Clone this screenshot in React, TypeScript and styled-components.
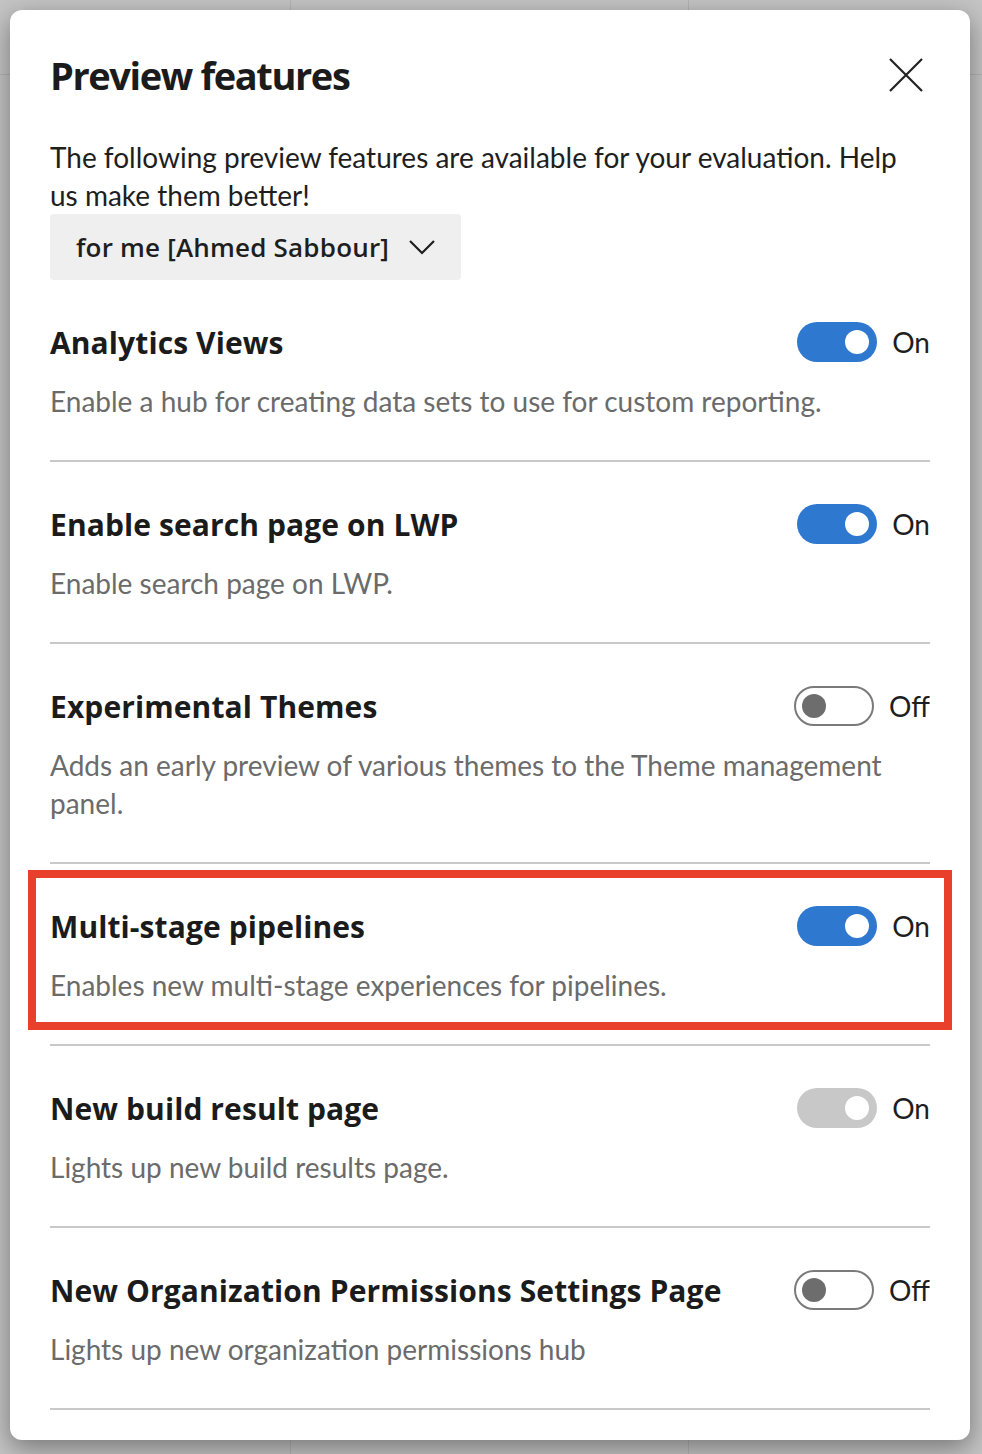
import React from 'react';
import styled, { createGlobalStyle } from 'styled-components';

const GlobalStyle = createGlobalStyle`
  html, body {
    margin: 0;
    padding: 0;
  }
  body {
    font-family: Lato, "Open Sans", sans-serif;
    color: #1e1e1e;
    background: #c4c4c4;
  }
`;

const Page = styled.div`
  width: 982px;
  height: 1454px;
  box-sizing: border-box;
  padding: 10px 12px 14px 10px;
  background-color: #c4c4c4;
  background-image:
    linear-gradient(to right, transparent 290px, #b4b4b4 290px, #b4b4b4 291px, transparent 291px),
    linear-gradient(to right, transparent 688px, #b4b4b4 688px, #b4b4b4 689px, transparent 689px),
    linear-gradient(to bottom, transparent 74px, #b4b4b4 74px, #b4b4b4 75px, transparent 75px);
  overflow: hidden;
`;

const Dialog = styled.div`
  width: 960px;
  height: 1430px;
  box-sizing: border-box;
  padding: 39px 40px 0 40px;
  background: #fff;
  border-radius: 12px;
  box-shadow: 0 8px 26px rgba(0, 0, 0, 0.4);
  overflow: hidden;
`;

const Header = styled.div`
  display: flex;
  align-items: center;
  justify-content: space-between;
  height: 52px;
`;

const Title = styled.h1`
  margin: 0;
  font-family: "Open Sans", Lato, sans-serif;
  font-size: 38px;
  line-height: 52px;
  font-weight: 700;
  letter-spacing: -1.4px;
  color: #1b1b1b;
`;

const CloseButton = styled.button`
  display: flex;
  align-items: center;
  justify-content: center;
  width: 40px;
  height: 40px;
  margin-right: 4px;
  padding: 0;
  border: none;
  background: transparent;
  color: #222;
  cursor: pointer;
`;

const Intro = styled.p`
  margin: 37px 0 0 0;
  font-size: 28px;
  line-height: 38px;
  color: #1e1e1e;
`;

const Dropdown = styled.button`
  display: inline-flex;
  align-items: center;
  gap: 20px;
  height: 66px;
  padding: 0 26px;
  border: none;
  border-radius: 4px;
  background: #efefef;
  font-family: "Open Sans", Lato, sans-serif;
  font-size: 26px;
  font-weight: 600;
  letter-spacing: 0.2px;
  color: #1e1e1e;
  cursor: pointer;
`;

const Section = styled.div`
  position: relative;
  padding: 42px 0 40px 0;
  border-bottom: 2px solid #c8c8c8;
`;

const Highlight = styled.div`
  position: absolute;
  top: 6px;
  bottom: 14px;
  left: -22px;
  right: -22px;
  border: 8px solid #e8402a;
  pointer-events: none;
`;

const TitleRow = styled.div`
  display: flex;
  align-items: center;
  justify-content: space-between;
  height: 40px;
`;

const FeatureName = styled.h2`
  margin: 0;
  font-family: "Open Sans", Lato, sans-serif;
  font-size: 30px;
  font-weight: 700;
  letter-spacing: 0.1px;
  color: #1b1b1b;
`;

const ToggleWrap = styled.div`
  display: flex;
  align-items: center;
  gap: 15px;
`;

const Track = styled.span<{ $on: boolean; $disabled?: boolean }>`
  position: relative;
  display: block;
  width: 80px;
  height: 40px;
  box-sizing: border-box;
  border-radius: 20px;
  border: ${({ $on }) => ($on ? 'none' : '2px solid #7a7a7a')};
  background: ${({ $on, $disabled }) =>
    !$on ? '#fff' : $disabled ? '#c8c8c8' : '#2f78d0'};

  &::after {
    content: '';
    position: absolute;
    top: 50%;
    width: 24px;
    height: 24px;
    margin-top: -12px;
    border-radius: 50%;
    background: ${({ $on }) => ($on ? '#fff' : '#6d6d6d')};
    ${({ $on }) => ($on ? 'right: 8px;' : 'left: 6px;')}
  }
`;

const ToggleLabel = styled.span`
  font-size: 28px;
  color: #1e1e1e;
`;

const Description = styled.p`
  margin: 20px 0 0 0;
  font-size: 28px;
  line-height: 38px;
  color: #6b6b6b;
`;

type Feature = {
  name: string;
  description: string;
  on: boolean;
  disabled?: boolean;
  highlighted?: boolean;
};

const features: Feature[] = [
  {
    name: 'Analytics Views',
    description: 'Enable a hub for creating data sets to use for custom reporting.',
    on: true,
  },
  {
    name: 'Enable search page on LWP',
    description: 'Enable search page on LWP.',
    on: true,
  },
  {
    name: 'Experimental Themes',
    description: 'Adds an early preview of various themes to the Theme management panel.',
    on: false,
  },
  {
    name: 'Multi-stage pipelines',
    description: 'Enables new multi-stage experiences for pipelines.',
    on: true,
    highlighted: true,
  },
  {
    name: 'New build result page',
    description: 'Lights up new build results page.',
    on: true,
    disabled: true,
  },
  {
    name: 'New Organization Permissions Settings Page',
    description: 'Lights up new organization permissions hub',
    on: false,
  },
];

const Toggle = ({ on, disabled }: { on: boolean; disabled?: boolean }) => (
  <ToggleWrap>
    <Track $on={on} $disabled={disabled} />
    <ToggleLabel>{on ? 'On' : 'Off'}</ToggleLabel>
  </ToggleWrap>
);

export default function App() {
  return (
    <>
      <GlobalStyle />
      <Page>
        <Dialog>
          <Header>
            <Title>Preview features</Title>
            <CloseButton aria-label="Close">
              <svg width="34" height="34" viewBox="0 0 34 34" fill="none" stroke="currentColor" strokeWidth="2.2">
                <path d="M1 1 L33 33 M33 1 L1 33" />
              </svg>
            </CloseButton>
          </Header>
          <Intro>
            The following preview features are available for your evaluation. Help us make them better!
          </Intro>
          <Dropdown>
            <span>for me [Ahmed Sabbour]</span>
            <svg width="26" height="16" viewBox="0 0 26 16" fill="none" stroke="currentColor" strokeWidth="2.2">
              <path d="M1 2 L13 14 L25 2" />
            </svg>
          </Dropdown>
          {features.map((f) => (
            <Section key={f.name}>
              {f.highlighted && <Highlight />}
              <TitleRow>
                <FeatureName>{f.name}</FeatureName>
                <Toggle on={f.on} disabled={f.disabled} />
              </TitleRow>
              <Description>{f.description}</Description>
            </Section>
          ))}
        </Dialog>
      </Page>
    </>
  );
}
